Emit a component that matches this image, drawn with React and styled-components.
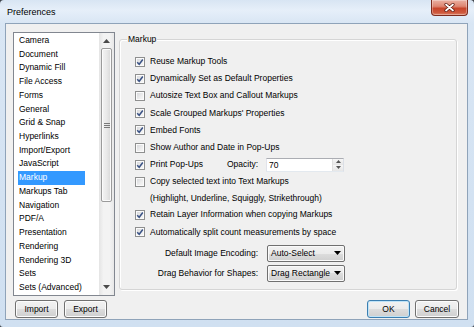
import React from 'react';
import styled, { createGlobalStyle } from 'styled-components';

const Global = createGlobalStyle`
  html, body { margin: 0; padding: 0; background: #3d424a; }
  body { font-family: "Liberation Sans", Arial, sans-serif; font-size: 8.5px; color: #000; }
  #root { width: 474px; height: 327px; }
`;

const Window = styled.div`
  width: 474px;
  height: 327px;
  box-sizing: border-box;
  display: flex;
  flex-direction: column;
  border-radius: 4px 4px 3px 3px;
  overflow: hidden;
  background: linear-gradient(180deg, #d8e5f3 0px, #e6eff9 10px, #d9e6f4 23px, #d3e2f2 60%, #d0e0f1 100%);
`;

const TitleBar = styled.div`
  flex: none;
  height: 23px;
  display: flex;
  justify-content: space-between;
  align-items: flex-start;
`;

const Title = styled.div`
  padding: 7px 0 0 7px;
  font-size: 9px;
  line-height: 10px;
  color: #000;
`;

const CloseBtn = styled.div`
  width: 37px;
  height: 16px;
  margin-right: 6px;
  box-sizing: border-box;
  border: 1px solid #7d2b1d;
  border-top: none;
  border-radius: 0 0 4px 4px;
  background: linear-gradient(180deg, #eab0a2 0%, #de8672 42%, #c8452b 56%, #cf5a3e 85%, #de8a70 100%);
  box-shadow: inset 0 0 0 1px rgba(255, 255, 255, 0.3);
  display: flex;
  align-items: center;
  justify-content: center;
`;

const Client = styled.div`
  flex: 1;
  margin: 0 6px 8px 5px;
  border: 1px solid #8fa3b9;
  background: #f0f0f0;
  display: grid;
  grid-template-columns: 102px 340px;
  grid-template-rows: 1fr 18px;
  column-gap: 4px;
  row-gap: 4px;
  padding: 8px 8px 1px 7px;
  box-sizing: border-box;
`;

const ListBox = styled.div`
  border: 1px solid #828790;
  background: #fff;
  display: flex;
  overflow: hidden;
  min-height: 0;
`;

const Items = styled.div`
  flex: 1;
  padding: 1px 0 0 4px;
  display: flex;
  flex-direction: column;
`;

const Item = styled.div`
  flex: none;
  height: 13.72px;
  line-height: 13.72px;
  width: 67px;
  padding-left: 1px;
  box-sizing: border-box;
  white-space: nowrap;
  color: ${(p) => (p.$selected ? '#fff' : '#000')};
  background: ${(p) => (p.$selected ? '#3399ff' : 'transparent')};
`;

const ScrollBar = styled.div`
  flex: none;
  width: 15px;
  display: flex;
  flex-direction: column;
  background: linear-gradient(90deg, #e4e4e4 0%, #f3f3f3 30%, #f3f3f3 70%, #e8e8e8 100%);
`;

const ScrollBtn = styled.div`
  flex: none;
  height: 15px;
  display: flex;
  align-items: center;
  justify-content: center;
`;

const Thumb = styled.div`
  flex: none;
  height: 154px;
  margin: 0 2px;
  box-sizing: border-box;
  border: 1px solid #9b9b9b;
  border-radius: 2px;
  background: linear-gradient(90deg, #f4f4f4 0%, #e9e9e9 50%, #d8d8d8 100%);
  box-shadow: inset 0 0 0 1px #fbfbfb;
  display: flex;
  align-items: center;
  justify-content: center;
`;

const Spacer = styled.div`
  flex: 1;
`;

const GroupBox = styled.div`
  position: relative;
  margin-top: 7px;
  height: 251px;
  width: 338px;
  box-sizing: border-box;
  border: 1px solid #d5d5d5;
  border-radius: 3px;
  box-shadow: inset 1px 1px 0 #fff, 1px 1px 0 #fff;
  padding: 13px 0 0 15px;
`;

const GroupLabel = styled.div`
  position: absolute;
  top: -6px;
  left: 7px;
  padding: 0 1px;
  line-height: 11px;
  background: #f0f0f0;
`;

const CheckRow = styled.div`
  display: flex;
  align-items: flex-start;
  height: ${(p) => p.$h || 17.2}px;
`;

const Box = styled.div`
  flex: none;
  width: 10px;
  height: 10px;
  margin: 3.6px 5px 0 0;
  box-sizing: border-box;
  border: 1px solid #8e8f8f;
  background: linear-gradient(135deg, #d2d4d8 0%, #eeeeee 60%, #f8f8f8 100%);
  box-shadow: inset 0 0 0 1px #fbfbfb;
  display: flex;
  align-items: center;
  justify-content: center;
`;

const Text = styled.div`
  line-height: ${(p) => p.$lh || 17.2}px;
  white-space: nowrap;
  width: ${(p) => (p.$w ? `${p.$w}px` : 'auto')};
  flex: none;
`;

const SpinInput = styled.div`
  flex: none;
  width: 78px;
  height: 14px;
  margin-top: 1.6px;
  box-sizing: border-box;
  border: 1px solid;
  border-color: #abadb3 #dbdfe6 #e3e9ef #e2e3ea;
  background: #fff;
  display: flex;
`;

const SpinValue = styled.div`
  flex: 1;
  padding-left: 2px;
  line-height: 12px;
`;

const SpinBtns = styled.div`
  flex: none;
  width: 11px;
  display: flex;
  flex-direction: column;
`;

const SpinHalf = styled.div`
  flex: 1;
  display: flex;
  align-items: center;
  justify-content: center;
  background: linear-gradient(180deg, #f6f6f6, #e6e6e6);
  border-left: 1px solid #e0e0e0;
`;

const SelectGrid = styled.div`
  margin-top: 4px;
  display: grid;
  grid-template-columns: 123px 78px;
  grid-auto-rows: 17px;
  column-gap: 9px;
  row-gap: 3px;
`;

const SelectLabel = styled.div`
  text-align: right;
  line-height: 17px;
  white-space: nowrap;
`;

const Select = styled.div`
  box-sizing: border-box;
  border: 1px solid #707070;
  border-radius: 2px;
  background: linear-gradient(180deg, #f2f2f2 0%, #ebebeb 50%, #dddddd 50%, #cfcfcf 100%);
  box-shadow: inset 0 0 0 1px #fafafa;
  display: flex;
  align-items: center;
  justify-content: space-between;
  padding: 0 3px 0 3px;
  white-space: nowrap;
`;

const ButtonRow = styled.div`
  display: flex;
  gap: ${(p) => p.$gap}px;
  justify-content: ${(p) => (p.$right ? 'flex-end' : 'flex-start')};
  padding-left: ${(p) => (p.$right ? 0 : 2)}px;
`;

const Button = styled.div`
  width: ${(p) => p.$w}px;
  height: 18px;
  box-sizing: border-box;
  border: 1px solid ${(p) => (p.$default ? '#3c7fb1' : '#707070')};
  border-radius: 3px;
  background: linear-gradient(180deg, #f2f2f2 0%, #ebebeb 50%, #dddddd 50%, #cfcfcf 100%);
  box-shadow: inset 0 0 0 1px ${(p) => (p.$default ? '#bfe3f7' : '#fcfcfc')};
  display: flex;
  align-items: center;
  justify-content: center;
`;

const RightCol = styled.div`
  display: flex;
  flex-direction: column;
`;

const Up = () => (
  <svg width="7" height="4" viewBox="0 0 7 4"><path d="M0 4 L3.5 0 L7 4 Z" fill="#4a4a4a" /></svg>
);
const Down = ({ c = '#4a4a4a' }) => (
  <svg width="7" height="4" viewBox="0 0 7 4"><path d="M0 0 L7 0 L3.5 4 Z" fill={c} /></svg>
);
const Grip = () => (
  <svg width="6" height="5" viewBox="0 0 6 5">
    <path d="M0 0.5 H6 M0 2.5 H6 M0 4.5 H6" stroke="#7a7a7a" strokeWidth="1" />
  </svg>
);
const Check = () => (
  <svg width="8" height="8" viewBox="0 0 8 8">
    <path d="M1.2 4.2 L3.2 6.3 L6.8 1.5" fill="none" stroke="#3a5285" strokeWidth="1.5" />
  </svg>
);

const CheckItem = ({ on, children, h, lh }) => (
  <CheckRow $h={h}>
    <Box>{on && <Check />}</Box>
    <Text $lh={lh}>{children}</Text>
  </CheckRow>
);

const categories = [
  'Camera', 'Document', 'Dynamic Fill', 'File Access', 'Forms', 'General', 'Grid & Snap',
  'Hyperlinks', 'Import/Export', 'JavaScript', 'Markup', 'Markups Tab', 'Navigation', 'PDF/A',
  'Presentation', 'Rendering', 'Rendering 3D', 'Sets', 'Sets (Advanced)',
];

export default function App() {
  return (
    <>
      <Global />
      <Window>
        <TitleBar>
          <Title>Preferences</Title>
          <CloseBtn>
            <svg width="11" height="9" viewBox="0 0 11 9">
              <path d="M2 1.5 L9 7.5 M9 1.5 L2 7.5" stroke="#5b1a10" strokeWidth="3.2" strokeLinecap="round" />
              <path d="M2 1.5 L9 7.5 M9 1.5 L2 7.5" stroke="#fff" strokeWidth="1.7" strokeLinecap="round" />
            </svg>
          </CloseBtn>
        </TitleBar>
        <Client>
          <ListBox>
            <Items>
              {categories.map((c) => (
                <Item key={c} $selected={c === 'Markup'}>{c}</Item>
              ))}
            </Items>
            <ScrollBar>
              <ScrollBtn><Up /></ScrollBtn>
              <Thumb><Grip /></Thumb>
              <Spacer />
              <ScrollBtn><Down /></ScrollBtn>
            </ScrollBar>
          </ListBox>
          <RightCol>
            <GroupBox>
              <GroupLabel>Markup</GroupLabel>
              <CheckItem on>Reuse Markup Tools</CheckItem>
              <CheckItem on>Dynamically Set as Default Properties</CheckItem>
              <CheckItem>Autosize Text Box and Callout Markups</CheckItem>
              <CheckItem on>Scale Grouped Markups' Properties</CheckItem>
              <CheckItem on>Embed Fonts</CheckItem>
              <CheckItem>Show Author and Date in Pop-Ups</CheckItem>
              <CheckRow>
                <Box><Check /></Box>
                <Text $w={77}>Print Pop-Ups</Text>
                <Text $w={39}>Opacity:</Text>
                <SpinInput>
                  <SpinValue>70</SpinValue>
                  <SpinBtns>
                    <SpinHalf><svg width="5" height="3" viewBox="0 0 5 3"><path d="M0 3 L2.5 0 L5 3 Z" fill="#555" /></svg></SpinHalf>
                    <SpinHalf><svg width="5" height="3" viewBox="0 0 5 3"><path d="M0 0 L5 0 L2.5 3 Z" fill="#555" /></svg></SpinHalf>
                  </SpinBtns>
                </SpinInput>
              </CheckRow>
              <CheckItem h={33} lh={16.5}>
                Copy selected text into Text Markups
                <br />
                (Highlight, Underline, Squiggly, Strikethrough)
              </CheckItem>
              <CheckItem on>Retain Layer Information when copying Markups</CheckItem>
              <CheckItem on>Automatically split count measurements by space</CheckItem>
              <SelectGrid>
                <SelectLabel>Default Image Encoding:</SelectLabel>
                <Select>Auto-Select<Down c="#000" /></Select>
                <SelectLabel>Drag Behavior for Shapes:</SelectLabel>
                <Select>Drag Rectangle<Down c="#000" /></Select>
              </SelectGrid>
            </GroupBox>
          </RightCol>
          <ButtonRow $gap={6}>
            <Button $w={43}>Import</Button>
            <Button $w={43}>Export</Button>
          </ButtonRow>
          <ButtonRow $gap={5} $right>
            <Button $w={43} $default>OK</Button>
            <Button $w={44}>Cancel</Button>
          </ButtonRow>
        </Client>
      </Window>
    </>
  );
}
